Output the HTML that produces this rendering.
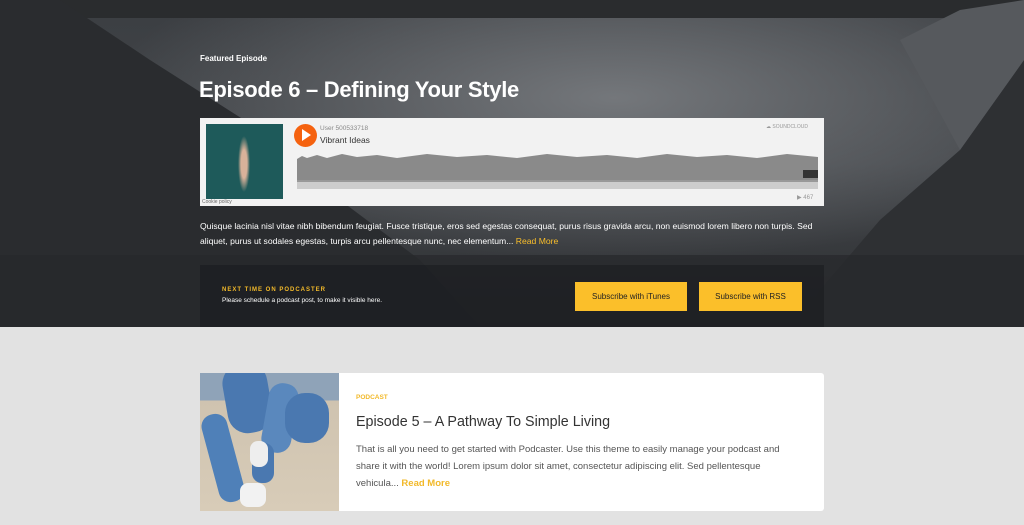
<!DOCTYPE html>
<html><head><meta charset="utf-8"><style>
*{margin:0;padding:0;box-sizing:border-box}
body{width:1024px;height:525px;overflow:hidden;background:#e2e2e2;font-family:"Liberation Sans",sans-serif;position:relative}
.hero{position:absolute;left:0;top:0;width:1024px;height:327px;background:#2b2d30;overflow:hidden}
.abs{position:absolute}
.wf{position:absolute;left:297px;top:150px;width:521px;height:40px}
</style></head><body>
<div class="hero">
<svg class="abs" style="left:0;top:0" width="1024" height="327">
<defs>
<linearGradient id="sky" x1="0" y1="0" x2="0" y2="1"><stop offset="0" stop-color="#3b3e42"/><stop offset=".5" stop-color="#43464a"/><stop offset="1" stop-color="#2c2e31"/></linearGradient>
<radialGradient id="snow" cx=".6" cy=".3" r=".5"><stop offset="0" stop-color="#74777b"/><stop offset="1" stop-color="#74777b" stop-opacity="0"/></radialGradient>
</defs>
<rect width="1024" height="327" fill="url(#sky)"/>
<rect width="1024" height="327" fill="url(#snow)"/>
<rect width="1024" height="18" fill="#2a2c2e"/>
<polygon points="0,0 60,0 150,60 260,130 340,200 420,260 480,327 0,327" fill="#2a2c2f"/>
<polygon points="1024,60 960,150 880,220 820,290 800,327 1024,327" fill="#2e3033"/>
<polygon points="900,40 960,10 1024,0 1024,60 960,150" fill="#56595d"/>
<rect y="255" width="1024" height="72" fill="#26282b" opacity=".7"/>
</svg>
<div class="abs" style="left:200px;top:54px;color:#fff;font-size:8px;font-weight:bold">Featured Episode</div>
<div class="abs" style="left:199px;top:77px;color:#fff;font-size:22px;font-weight:bold;letter-spacing:-.3px">Episode 6 – Defining Your Style</div>
<div class="abs" style="left:200px;top:118px;width:624px;height:88px;background:#f2f2f2"></div>
<div class="abs" style="left:206px;top:124px;width:77px;height:75px;background:radial-gradient(ellipse 6px 28px at 38px 40px,#d9b29a 50%,transparent 100%),#1e5a5a"></div>
<div class="abs" style="left:202px;top:199px;font-size:5px;color:#666">Cookie policy</div>
<div class="abs" style="left:294px;top:124px;width:23px;height:23px;border-radius:50%;background:#f5620f"></div>
<div class="abs" style="left:302px;top:129px;width:0;height:0;border-left:9px solid #fff;border-top:6.5px solid transparent;border-bottom:6.5px solid transparent"></div>
<div class="abs" style="left:320px;top:125px;font-size:6.5px;color:#888">User 500533718</div>
<div class="abs" style="left:320px;top:135px;font-size:8.5px;color:#333">Vibrant Ideas</div>
<div class="abs" style="left:766px;top:124px;font-size:5px;color:#999">☁ SOUNDCLOUD</div>
<svg class="wf" viewBox="0 0 521 40" preserveAspectRatio="none">
<path d="M0 9 L5 6 L10 8 L20 5 L30 8 L45 4 L60 7 L80 5 L100 8 L130 4 L160 7 L190 5 L220 8 L250 4 L280 7 L310 5 L340 8 L370 4 L400 7 L430 5 L460 8 L490 4 L521 7 L521 30 L0 30Z" fill="#8a8a8a"/>
<rect x="0" y="30" width="521" height="2" fill="#999"/>
<rect x="0" y="32" width="521" height="7" fill="#cdcdcd"/>
<rect x="506" y="20" width="15" height="8" fill="#333"/>
</svg>
<div class="abs" style="left:797px;top:194px;font-size:6px;color:#999">▶ 467</div>
<div class="abs" style="left:200px;top:219px;width:620px;color:#fff;font-size:8.6px;line-height:15px">Quisque lacinia nisl vitae nibh bibendum feugiat. Fusce tristique, eros sed egestas consequat, purus risus gravida arcu, non euismod lorem libero non turpis. Sed aliquet, purus ut sodales egestas, turpis arcu pellentesque nunc, nec elementum... <span style="color:#fbbf2a">Read More</span></div>
<div class="abs" style="left:200px;top:265px;width:624px;height:62px;background:rgba(20,22,26,.45)"></div>
<div class="abs" style="left:222px;top:287px;color:#f2b92a;font-size:6px;font-weight:bold;letter-spacing:1px">NEXT TIME ON PODCASTER</div>
<div class="abs" style="left:222px;top:297px;color:#fff;font-size:6.5px">Please schedule a podcast post, to make it visible here.</div>
<div class="abs" style="left:575px;top:282px;width:112px;height:29px;background:#fbbf2a;color:#222;font-size:8px;text-align:center;line-height:29px">Subscribe with iTunes</div>
<div class="abs" style="left:699px;top:282px;width:103px;height:29px;background:#fbbf2a;color:#222;font-size:8px;text-align:center;line-height:29px">Subscribe with RSS</div>
</div>
<div class="abs" style="left:200px;top:373px;width:624px;height:138px;background:#fff;border-radius:3px"></div>
<div class="abs" style="left:200px;top:373px;width:139px;height:138px;overflow:hidden;background:linear-gradient(#8fa3b8 0,#8fa3b8 20%,#cfc3b0 20%,#d8ccb8 100%)">
<div class="abs" style="left:25px;top:-10px;width:45px;height:70px;background:#4a78b0;border-radius:20px;transform:rotate(-10deg)"></div>
<div class="abs" style="left:10px;top:40px;width:26px;height:90px;background:#4f80b8;border-radius:12px;transform:rotate(-15deg)"></div>
<div class="abs" style="left:65px;top:10px;width:30px;height:70px;background:#5a88bd;border-radius:14px;transform:rotate(10deg)"></div>
<div class="abs" style="left:85px;top:20px;width:44px;height:50px;background:#4a78b0;border-radius:20px"></div>
<div class="abs" style="left:52px;top:70px;width:22px;height:40px;background:#4a78b0;border-radius:10px"></div>
<div class="abs" style="left:50px;top:68px;width:18px;height:26px;background:#eee;border-radius:8px"></div>
<div class="abs" style="left:40px;top:110px;width:26px;height:24px;background:#f2f2f2;border-radius:8px"></div>
</div>
<div class="abs" style="left:356px;top:394px;color:#f2b92a;font-size:6.5px;font-weight:bold">PODCAST</div>
<div class="abs" style="left:356px;top:414px;color:#333;font-size:14.3px">Episode 5 – A Pathway To Simple Living</div>
<div class="abs" style="left:356px;top:441px;width:436px;color:#555;font-size:9.5px;line-height:17px">That is all you need to get started with Podcaster. Use this theme to easily manage your podcast and share it with the world! Lorem ipsum dolor sit amet, consectetur adipiscing elit. Sed pellentesque vehicula... <span style="color:#f2b92a;font-weight:bold">Read More</span></div>
</body></html>
